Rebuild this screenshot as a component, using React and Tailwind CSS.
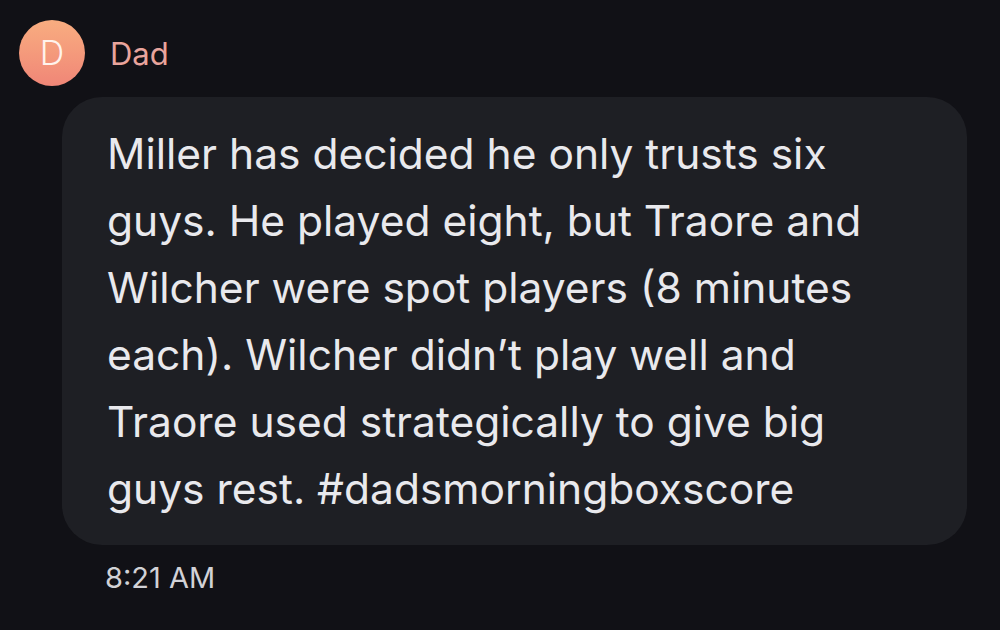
export default function App() {
  const lines = [
    "Miller has decided he only trusts six",
    "guys. He played eight, but Traore and",
    "Wilcher were spot players (8 minutes",
    "each). Wilcher didn\u2019t play well and",
    "Traore used strategically to give big",
    "guys rest. #dadsmorningboxscore",
  ];
  return (
    <div className="w-[1000px] h-[630px] bg-[#111116] overflow-hidden" style={{ fontFamily: "Inter, 'Liberation Sans', sans-serif" }}>
      <div className="flex items-center pt-[20px] pl-[19px] gap-[25px]">
        <div className="w-[66px] h-[66px] rounded-full bg-gradient-to-b from-[#f8ad80] to-[#f08677] flex items-center justify-center text-[#fff3ec] text-[34px] font-light leading-none">
          D
        </div>
        <div className="text-[#e9a49c] text-[31px] leading-none">Dad</div>
      </div>
      <div className="ml-[62px] mt-[11px] w-[905px] h-[448px] rounded-[40px] bg-[#1e1f24] pl-[45px] pt-[23px] text-[#e9e9ed] text-[42.5px] leading-[67px]">
        {lines.map((l, i) => (
          <div key={i} className="whitespace-nowrap">{l}</div>
        ))}
      </div>
      <div className="ml-[105px] mt-[18px] text-[#d2d2d6] text-[29px] leading-none">8:21 AM</div>
    </div>
  );
}
